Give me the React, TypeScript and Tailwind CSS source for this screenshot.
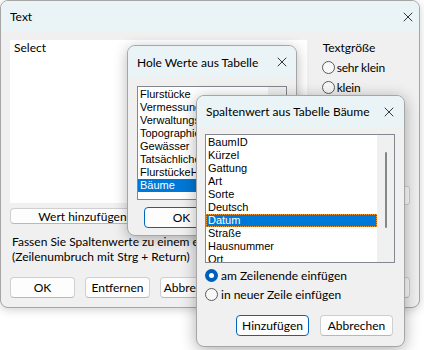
import { X } from 'lucide-react';

const ui = "font-['Lato',sans-serif] text-[12px] leading-[15px] text-black";
const listFont = "font-['Liberation_Sans',Arial,sans-serif] text-[11px] leading-[13px]";

function Button({ label, primary, className = '' }: { label: string; primary?: boolean; className?: string }) {
  return (
    <div
      className={`flex items-center justify-center rounded-[4px] bg-[#fdfdfd] ${
        primary ? 'border-[1.5px] border-[#0067c0]' : 'border border-[#cfcfcf] border-b-[#b8b8b8]'
      } ${className}`}
    >
      {label}
    </div>
  );
}

function Radio({ checked }: { checked?: boolean }) {
  if (checked) {
    return (
      <div className="flex h-[13px] w-[13px] shrink-0 items-center justify-center rounded-full bg-[#005fb8]">
        <div className="h-[5px] w-[5px] rounded-full bg-white" />
      </div>
    );
  }
  return <div className="h-[13px] w-[13px] shrink-0 rounded-full border border-[#5a5a5a] bg-[#f8f8f8]" />;
}

function TitleBar({ title, height, padLeft, closeRight }: { title: string; height: string; padLeft: string; closeRight: string }) {
  return (
    <div className={`flex items-center justify-between whitespace-nowrap bg-[#eaf4f7] ${height} ${padLeft} ${closeRight}`}>
      <span>{title}</span>
      <X size={16} strokeWidth={1.3} className="shrink-0 text-[#1a1a1a]" />
    </div>
  );
}

const tables = ['Flurstücke', 'Vermessungspunkte', 'Verwaltungsgrenzen', 'Topographie', 'Gewässer', 'Tatsächliche Nutzung', 'FlurstückeHistorisch', 'Bäume'];
const columns = ['BaumID', 'Kürzel', 'Gattung', 'Art', 'Sorte', 'Deutsch', 'Datum', 'Straße', 'Hausnummer', 'Ort'];

export default function App() {
  return (
    <div className={`relative h-[350px] w-[424px] overflow-hidden bg-white ${ui}`}>
      {/* Main window */}
      <div className="absolute left-0 top-0 flex h-[308px] w-[420px] flex-col overflow-hidden rounded-[8px] border border-[#a6a6a6] bg-[#f0f0f0] shadow-[0_2px_10px_rgba(0,0,0,0.18)]">
        <TitleBar title="Text" height="h-[31px]" padLeft="pl-[9px]" closeRight="pr-[3px]" />
        <div className="flex flex-col px-[9px] pt-[8px]">
          <div className="flex">
            <div className="flex w-[299px] flex-col">
              <div className="h-[163px] bg-white pl-[4px]">Select</div>
              <Button label="Wert hinzufügen" className="mt-[5px] h-[16px] w-[145px]" />
            </div>
            <div className="ml-[15px] flex w-[89px] flex-col">
              <div className="pl-[1px]">Textgröße</div>
              <div className="mt-[5px] flex flex-col gap-[5px]">
                {['sehr klein', 'klein', 'mittel', 'groß', 'sehr groß'].map((s) => (
                  <div key={s} className="flex h-[15px] items-center gap-[2px] tracking-[-0.2px]">
                    <Radio checked={s === 'mittel'} />
                    <span>{s}</span>
                  </div>
                ))}
              </div>
              <div className="mt-[31px] flex h-[19px] items-center justify-end rounded-[3px] border border-[#cfcfcf] bg-white pr-[3px] text-[9px]">
                ✓
              </div>
            </div>
          </div>
          <div className="mt-[10px] whitespace-nowrap pl-[2px]">
            Fassen Sie Spaltenwerte zu einem einzelnen Textwert zusammen
            <br />
            (Zeilenumbruch mit Strg + Return)
          </div>
          <div className="mt-[13px] flex gap-[10px]">
            <Button label="OK" className="h-[21px] w-[65px]" />
            <Button label="Entfernen" className="h-[21px] w-[65px]" />
            <Button label="Abbrechen" className="h-[21px] w-[65px]" />
            <Button label="Hilfe" className="ml-auto h-[21px] w-[65px]" />
          </div>
        </div>
      </div>

      {/* Hole Werte aus Tabelle */}
      <div className="absolute left-[127px] top-[45px] flex h-[191px] w-[170px] flex-col overflow-hidden rounded-[8px] border border-[#a6a6a6] bg-[#f0f0f0] shadow-[0_3px_14px_rgba(0,0,0,0.28)]">
        <TitleBar title="Hole Werte aus Tabelle" height="h-[32px]" padLeft="pl-[9px]" closeRight="pr-[6px]" />
        <div className="flex flex-col px-[9px] pt-[8px]">
          <div className={`flex h-[114px] w-[150px] border border-[#828790] bg-white ${listFont}`}>
            <div className="flex flex-1 flex-col overflow-hidden pt-[1px]">
              {tables.map((t) => (
                <div
                  key={t}
                  className={`whitespace-nowrap pl-[2px] ${t === 'Bäume' ? 'bg-[#0078d7] text-white' : 'text-[#000]'}`}
                >
                  {t}
                </div>
              ))}
            </div>
            <div className="w-[18px] bg-[#f0f0f0]" />
          </div>
          <Button label="OK" primary className="ml-[7px] mt-[7px] h-[21px] w-[75px]" />
        </div>
      </div>

      {/* Spaltenwert aus Tabelle Bäume */}
      <div className="absolute left-[196px] top-[95px] flex h-[252px] w-[209px] flex-col overflow-hidden rounded-[8px] border border-[#a6a6a6] bg-[#f0f0f0] shadow-[0_3px_16px_rgba(0,0,0,0.32)]">
        <TitleBar title="Spaltenwert aus Tabelle Bäume" height="h-[31px]" padLeft="pl-[9px]" closeRight="pr-[7px]" />
        <div className="flex flex-col px-[8px] pt-[7px]">
          <div className={`flex h-[129px] w-[190px] border border-[#828790] bg-white ${listFont}`}>
            <div className="flex flex-1 flex-col overflow-hidden pt-[1px]">
              {columns.map((c) => (
                <div
                  key={c}
                  className={`whitespace-nowrap pl-[2px] ${
                    c === 'Datum'
                      ? 'bg-[#0078d7] text-white outline-1 -outline-offset-1 outline-dotted outline-[#f29b38]'
                      : 'text-[#000]'
                  }`}
                >
                  {c}
                </div>
              ))}
            </div>
            <div className="flex w-[17px] justify-center bg-[#f0f0f0] pt-[17px]">
              <div className="h-[76px] w-[2px] rounded-full bg-[#868686]" />
            </div>
          </div>
          <div className="mt-[5px] flex flex-col gap-[4px]">
            <div className="flex h-[15px] items-center gap-[3px]">
              <Radio checked />
              <span>am Zeilenende einfügen</span>
            </div>
            <div className="flex h-[15px] items-center gap-[3px]">
              <Radio />
              <span>in neuer Zeile einfügen</span>
            </div>
          </div>
          <div className="mt-[13px] flex justify-end gap-[11px] pr-[3px]">
            <Button label="Hinzufügen" primary className="h-[21px] w-[73px]" />
            <Button label="Abbrechen" className="h-[21px] w-[73px]" />
          </div>
        </div>
      </div>
    </div>
  );
}
